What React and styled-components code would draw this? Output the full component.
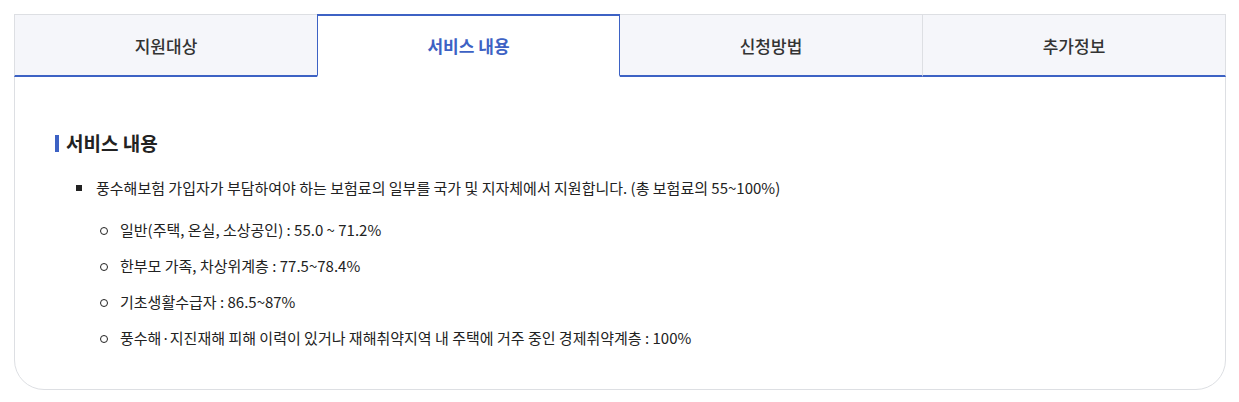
import React, { useState } from 'react';
import styled, { createGlobalStyle } from 'styled-components';

const GlobalStyle = createGlobalStyle`
  * { box-sizing: border-box; }
  body {
    margin: 0;
    background: #fff;
    font-family: "Noto Sans CJK KR", "Noto Sans", sans-serif;
    color: #222;
  }
`

const Page = styled.div`
  padding: 14px 13px 12px 14px;
`
const Card = styled.section`
  border: 1px solid #dddfe3;
  border-radius: 0 0 30px 30px;
  background: #fff;
`
const TabList = styled.div`
  display: grid;
  grid-template-columns: repeat(4, 1fr);
  margin: -1px -1px 0 -1px;
`
const Tab = styled.button`
  height: 63px;
  border: 0;
  margin: 0;
  padding: 0;
  font-family: inherit;
  font-size: 17px;
  cursor: pointer;
  background: ${(props) => (props.active ? '#fff' : '#f5f6fa')};
  color: ${(props) => (props.active ? '#3d62c4' : '#333')};
  font-weight: ${(props) => (props.active ? 700 : 500)};
  border-top: ${(props) => (props.active ? '2px solid #3d62c4' : '1px solid #dddfe3')};
  border-left: ${(props) => (props.active ? '1px solid #3d62c4' : props.first ? '1px solid #dddfe3' : '0')};
  border-right: ${(props) => (props.active ? '1px solid #3d62c4' : '1px solid #dddfe3')};
  border-bottom: ${(props) => (props.active ? '2px solid transparent' : '2px solid #3d62c4')};
  ${(props) => props.afterActive && 'border-left: 0;'}
  ${(props) => props.beforeActive && 'border-right: 0;'}
`
const Content = styled.div`
  padding: 53px 40px 40px 40px;
`
const Heading = styled.h3`
  display: flex;
  align-items: center;
  gap: 7px;
  margin: 0 0 21px 0;
  font-size: 19px;
  font-weight: 700;
  line-height: 26px;
  color: #222;

  &::before {
    content: '';
    width: 4px;
    height: 17px;
    background: #3d62c4;
  }
`
const List = styled.ul`
  list-style: none;
  margin: 0;
  padding: 0 0 0 21px;
`
const Item = styled.li`
  position: relative;
  padding-left: 20px;
  font-size: 15px;
  line-height: 22px;

  &::before {
    content: '';
    position: absolute;
    left: 0;
    top: 8px;
    width: 6px;
    height: 6px;
    background: #222;
  }
`
const SubList = styled.ul`
  list-style: none;
  margin: 20px 0 0 0;
  padding: 0 0 0 4px;
  display: flex;
  flex-direction: column;
  gap: 14px;
`
const SubItem = styled.li`
  position: relative;
  padding-left: 20px;
  font-size: 15px;
  line-height: 22px;

  &::before {
    content: '';
    position: absolute;
    left: 0;
    top: 8px;
    width: 6px;
    height: 6px;
    border: 1px solid #222;
    border-radius: 50%;
  }
`

const tabs = ['지원대상', '서비스 내용', '신청방법', '추가정보'];

const rates = [
  '일반(주택, 온실, 소상공인) : 55.0 ~ 71.2%',
  '한부모 가족, 차상위계층 : 77.5~78.4%',
  '기초생활수급자 : 86.5~87%',
  '풍수해·지진재해 피해 이력이 있거나 재해취약지역 내 주택에 거주 중인 경제취약계층 : 100%',
];

export default function App() {
  const [current, setCurrent] = useState(1);

  return (
    <Page>
      <GlobalStyle />
      <Card>
        <TabList>
          {tabs.map((label, i) => (
            <Tab
              key={label}
              active={i === current}
              first={i === 0}
              afterActive={i === current + 1}
              beforeActive={i === current - 1}
              onClick={() => setCurrent(i)}>
              {label}
            </Tab>
          ))}
        </TabList>
        <Content>
          <Heading>서비스 내용</Heading>
          <List>
            <Item>
              풍수해보험 가입자가 부담하여야 하는 보험료의 일부를 국가 및 지자체에서 지원합니다. (총 보험료의 55~100%)
              <SubList>
                {rates.map((r) => (
                  <SubItem key={r}>{r}</SubItem>
                ))}
              </SubList>
            </Item>
          </List>
        </Content>
      </Card>
    </Page>
  );
}
